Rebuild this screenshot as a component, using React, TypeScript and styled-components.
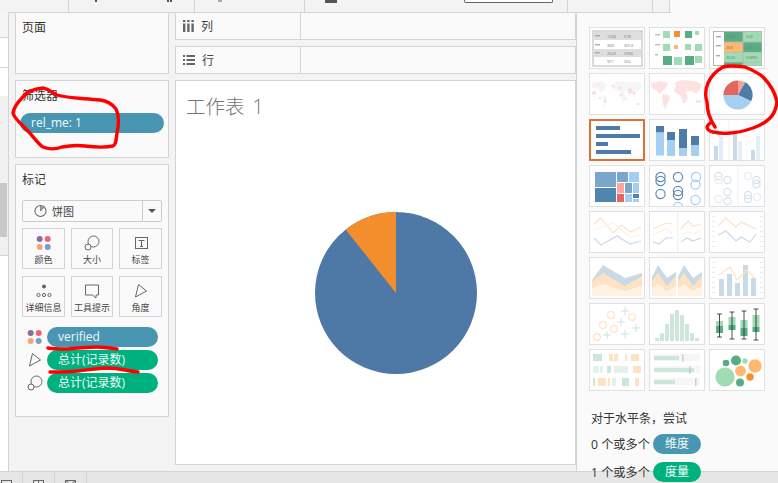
import React from "react";
import styled, { createGlobalStyle } from "styled-components";

const Global = createGlobalStyle`
  html, body { margin: 0; padding: 0; background: #f3f3f3; }
  * { box-sizing: border-box; }
`;

const LINE = "#d4d4d4";
const FONT = `"Open Sans", "Noto Sans CJK SC", sans-serif`;

const Page = styled.div`
  width: 778px; height: 483px; overflow: hidden; position: relative;
  display: flex; flex-direction: column; background: #f3f3f3;
  font-family: ${FONT}; color: #333; font-size: 12px;
`;
const TopStrip = styled.div`display: flex; height: 13px; flex: none;`;
const TopSeg = styled.div<{ $w: number; $pad?: number }>`
  width: ${(p) => p.$w}px; flex: none; padding-left: ${(p) => p.$pad ?? 0}px;
  border-right: 1px solid ${LINE}; border-bottom: 1px solid ${LINE};
  display: flex; align-items: flex-start;
`;
const TopRest = styled.div`flex: 1; background: #fafafa;`;
const TopMark = styled.div<{ $w: number; $h: number; $c?: string; $ml?: number }>`
  width: ${(p) => p.$w}px; height: ${(p) => p.$h}px; background: ${(p) => p.$c ?? "#555"};
  margin-left: ${(p) => p.$ml ?? 0}px;
`;
const TopField = styled.div`
  width: 89px; height: 3px; margin: 0 14px 0 auto; background: #fff; border: 1px solid #666; border-top: 0; border-radius: 0 0 2px 2px;
`;
const Main = styled.div`flex: 1; min-height: 0; margin-top: -1px; display: flex;`;
const Sidebar = styled.div`
  width: 9px; flex: none; border-right: 1px solid ${LINE}; display: flex; flex-direction: column; background: #fff;
`;
const SideBlock = styled.div<{ $h: number; $c: string; $line?: boolean }>`
  height: ${(p) => p.$h}px; flex: none; background: ${(p) => p.$c};
  border-bottom: ${(p) => (p.$line ? `1px solid ${LINE}` : "0")};
  display: flex; align-items: center; overflow: hidden;
`;
const Thumbbar = styled.div`width: 7px; height: 100%; background: #c8c8c8;`;
const CardColumn = styled.div`
  width: 166px; flex: none; padding: 0 6px; display: flex; flex-direction: column; gap: 6px;
`;
const Card = styled.section<{ $h: number }>`
  height: ${(p) => p.$h}px; flex: none; background: #fafafa; border: 1px solid ${LINE};
  padding: 6px 4px 0 6px;
`;
const CardTitle = styled.div`font-size: 12px; line-height: 17px; color: #333;`;
const FilterPill = styled.div`
  height: 20px; margin: 9px 0 0 -2px; border-radius: 10px; background: #4996b2; color: #f4fbfd;
  font-size: 12px; line-height: 20px; padding-left: 11px;
`;
const MarksDropdown = styled.div`
  height: 22px; margin: 12px 0 0 0; width: 140px; background: #fafafa; border: 1px solid #ccc; border-radius: 2px;
  display: flex; align-items: center; padding-left: 11px; gap: 5px; font-size: 11px; color: #444; position: relative;
`;
const Caret = styled.div`
  margin-left: auto; width: 19px; height: 100%; border-left: 1px solid #ccc;
  display: flex; align-items: center; justify-content: center;
  &::after { content: ""; border: 4px solid transparent; border-top: 4px solid #555; border-bottom: 0; }
`;
const MarkGrid = styled.div`
  display: grid; grid-template-columns: 43px 42px 43px; column-gap: 6px; row-gap: 7px; margin-top: 6px; width: 140px;
`;
const MarkButton = styled.div`
  height: 41px; border: 1px solid ${LINE}; display: flex; flex-direction: column; align-items: center;
  font-size: 9px; line-height: 12px; color: #444; padding-top: 6px; white-space: nowrap;
  svg { flex: none; margin-bottom: 3px; }
`;
const PillList = styled.div`display: flex; flex-direction: column; gap: 3px; margin-top: 10px;`;
const PillRow = styled.div`display: flex; align-items: center; gap: 4px; padding-left: 5px;`;
const FieldPill = styled.div<{ $c: string }>`
  width: 111px; height: 20px; border-radius: 10px; background: ${(p) => p.$c}; color: #eefaf6;
  font-size: 12px; line-height: 20px; padding-left: 11px; white-space: nowrap;
`;
const Center = styled.div`
  width: 401px; flex: none; display: flex; flex-direction: column; gap: 6px; padding-bottom: 6px;
`;
const Shelf = styled.div`
  height: 28px; flex: none; display: flex; background: #fafafa; border: 1px solid ${LINE};
`;
const ShelfLabel = styled.div`
  width: 125px; border-right: 1px solid ${LINE}; display: flex; align-items: center; gap: 7px; padding-left: 7px; color: #444;
`;
const View = styled.div`
  flex: 1; background: #fff; border: 1px solid ${LINE}; display: flex; flex-direction: column; padding: 13px 0 0 10px;
`;
const SheetTitle = styled.h1`
  margin: 0; font-size: 19.5px; font-weight: 300; line-height: 26px; color: #757575; word-spacing: 3px;
`;
const Chart = styled.div`margin: 92px 0 0 129px; line-height: 0;`;
const Panel = styled.aside`
  flex: 1; background: #fafafa; border-left: 1px solid ${LINE}; padding: 15px 0 0 12px; position: relative;
  &::before { content: ""; position: absolute; left: 0; top: 0; width: 94px; height: 1px; background: ${LINE}; }
`;
const ThumbGrid = styled.div`display: grid; grid-template-columns: repeat(3, 56px); grid-auto-rows: 42px; column-gap: 4px; row-gap: 4px;`;
const Thumb = styled.div<{ $on?: boolean }>`
  background: #fff; border: ${(p) => (p.$on ? "2px solid #e06f35" : "1px solid #e0e0e0")}; overflow: hidden; line-height: 0;
  svg { display: block; margin: ${(p) => (p.$on ? "-1px" : "0")}; }
`;
const Hint = styled.div`margin: 18px 0 0 2px; font-size: 12px; color: #333;`;
const HintHead = styled.div`line-height: 20px; height: 17px;`;
const HintRow = styled.div`display: flex; align-items: center; height: 20px; margin-top: 8px; white-space: nowrap;`;
const HintLabel = styled.span`width: 62px; font-size: 12.2px;`;
const HintPill = styled.span<{ $c: string }>`
  width: 48px; height: 20px; border-radius: 10px; background: ${(p) => p.$c}; color: #f0fbf8;
  text-align: center; line-height: 20px; font-size: 12px;
`;
const BottomBar = styled.div`
  height: 12px; flex: none; background: #e6e6e6; border-top: 1px solid ${LINE}; display: flex;
`;
const Tab = styled.div<{ $w: number }>`
  width: ${(p) => p.$w}px; flex: none; border-right: 1px solid ${LINE}; overflow: hidden; display: flex; justify-content: flex-end; padding: 8px 10px 0 0;
`;
const Annotations = styled.svg`position: absolute; left: 0; top: 0; pointer-events: none;`;

const G = "#666";
const DotsIcon = ({ s = 16 }: { s?: number }) => (
  <svg width={s} height={s} viewBox="0 0 16 16">
    <circle cx="3.7" cy="4" r="3" fill="#8a6d9c" /><circle cx="11.7" cy="4" r="3" fill="#ed6477" />
    <circle cx="3.7" cy="12" r="3" fill="#f0a878" /><circle cx="11.7" cy="12" r="3" fill="#7a9ccb" />
  </svg>
);
const SizeIcon = ({ s = 16 }: { s?: number }) => (
  <svg width={s} height={s} viewBox="0 0 16 16" fill="none" stroke={G} strokeWidth="1">
    <circle cx="9.5" cy="6.5" r="5.5" /><circle cx="4" cy="12" r="3" fill="#fafafa" />
  </svg>
);
const LabelIcon = () => (
  <svg width="16" height="16" viewBox="0 0 16 16" fill="none" stroke={G}>
    <rect x="2.5" y="2.5" width="12" height="11" /><path d="M5.5 5.5h6M8.5 5.5v6M7 11.5h3" />
  </svg>
);
const DetailIcon = () => (
  <svg width="16" height="16" viewBox="0 0 16 16" fill="none" stroke={G}>
    <circle cx="8" cy="3.5" r="2" fill={G} stroke="none" />
    <circle cx="2.5" cy="12" r="1.6" /><circle cx="8" cy="12" r="1.6" /><circle cx="13.5" cy="12" r="1.6" />
  </svg>
);
const TipIcon = () => (
  <svg width="16" height="16" viewBox="0 0 16 16" fill="none" stroke={G}>
    <path d="M1.5 1.5h13v10h-2.5v3l-3.5-3h-7z" transform="translate(0 .5)" />
  </svg>
);
const AngleIcon = ({ s = 16 }: { s?: number }) => (
  <svg width={s} height={s} viewBox="0 0 16 16" fill="none" stroke={G}>
    <path d="M5.5 1.5 L13.5 8 L2.5 14 Z" />
  </svg>
);
const PieIcon = () => (
  <svg width="13" height="14" viewBox="0 0 14 14" fill="none" stroke={G}>
    <circle cx="7" cy="7" r="6" strokeWidth="1.1" /><path d="M7 1v6l4-4.3" />
    <path d="M7 1.5v5.5l3.7-3.9A6 6 0 0 0 7 1.5z" fill="#999" stroke="none" />
  </svg>
);
const ColsIcon = () => (
  <svg width="11" height="12" viewBox="0 0 11 12" fill={G}>
    <rect x="0" y="0" width="2.4" height="2" /><rect x="0" y="3.5" width="2.4" height="8.5" />
    <rect x="4.2" y="0" width="2.4" height="2" /><rect x="4.2" y="3.5" width="2.4" height="8.5" />
    <rect x="8.4" y="0" width="2.4" height="2" /><rect x="8.4" y="3.5" width="2.4" height="8.5" />
  </svg>
);
const RowsIcon = () => (
  <svg width="12" height="10" viewBox="0 0 12 10" fill={G}>
    <rect x="0" y="0" width="2" height="2" /><rect x="3.5" y="0" width="8.5" height="2" />
    <rect x="0" y="4" width="2" height="2" /><rect x="3.5" y="4" width="8.5" height="2" />
    <rect x="0" y="8" width="2" height="2" /><rect x="3.5" y="8" width="8.5" height="2" />
  </svg>
);

const DK = "#57ad84", GR = "#9fdcb4", OR = "#f5912c", LO = "#ffb870", BL = "#4e7ca8", LB = "#a5cff0";
const PO = "#fde3c4", PB = "#cad9e6", PP = "#fef3e2", PG = "#cce6da", PG2 = "#e2f2ea";
const tx = { fontFamily: FONT, fontSize: 4, fill: "#777" } as const;
const Svg = ({ children }: { children: React.ReactNode }) => (
  <svg width="54" height="40" viewBox="0 0 54 40">{children}</svg>
);
const Rects = ({ items, fill }: { items: number[][]; fill: string }) => (
  <>{items.map((r, i) => <rect key={i} x={r[0]} y={r[1]} width={r[2]} height={r[3]} fill={fill} />)}</>
);
const Rings = ({ items, stroke, r = 4.6, w = 1.2 }: { items: number[][]; stroke: string; r?: number; w?: number }) => (
  <>{items.map((c, i) => <circle key={i} cx={c[0]} cy={c[1]} r={r} fill="none" stroke={stroke} strokeWidth={w} />)}</>
);
const Line = ({ p, c, w = 1.2 }: { p: string; c: string; w?: number }) => (
  <polyline points={p} fill="none" stroke={c} strokeWidth={w} />
);
const Ticks = ({ x, w = 3 }: { x: number; w?: number }) => (
  <>{[4, 9, 14, 19, 24, 29, 34].map((y) => <rect key={y} x={x} y={y} width={w} height="0.8" fill="#e6e6e6" />)}</>
);
const sector = (cx: number, cy: number, r: number, a: number, b: number) => {
  const pt = (d: number) => `${cx + r * Math.sin((d * Math.PI) / 180)} ${cy - r * Math.cos((d * Math.PI) / 180)}`;
  return `M${cx} ${cy}L${pt(a)}A${r} ${r} 0 ${b - a > 180 ? 1 : 0} 1 ${pt(b)}Z`;
};
const Area = ({ dx = 0, pts }: { dx?: number; pts: [string, string][] }) => (
  <g transform={`translate(${dx} 0)`}>{pts.map(([p, c], i) => <polygon key={i} points={p} fill={c} />)}</g>
);

const thumbs: React.ReactNode[] = [
  <Svg key="t1">
    <rect x="3" y="3" width="49" height="35" fill="none" stroke="#b5b5b5" />
    <Rects fill="#dedede" items={[[4, 4, 47, 8], [4, 21, 47, 8]]} />
    <Rects fill="#aaa" items={[[5, 7, 5, 1.4], [5, 16, 5, 1.4], [5, 24, 5, 1.4]]} />
    <text x="17" y="9.5" style={tx}>1234</text><text x="34" y="9.5" style={tx}>678</text>
    <text x="17" y="18.5" style={tx}>368</text><text x="34" y="18.5" style={tx}>3014</text>
    <text x="17" y="26.5" style={tx}>2620</text><text x="34" y="26.5" style={tx}>2956</text>
    <text x="17" y="35" style={tx}>971</text><text x="34" y="35" style={tx}>322</text>
  </Svg>,
  <Svg key="t2">
    <Rects fill="#bbb" items={[[5, 6, 5, 1.4], [5, 16, 5, 1.4], [5, 26, 3, 1.4]]} />
    <Rects fill={GR} items={[[13, 3, 7, 7], [45, 3, 4, 4], [13, 16, 7, 7], [35, 16, 6, 6], [45, 16, 7, 7], [24, 29, 8, 8], [45, 28, 7, 7]]} />
    <Rects fill={OR} items={[[24, 3, 6, 6]]} />
    <Rects fill={DK} items={[[35, 3, 7, 7], [13, 28, 9, 9], [35, 28, 9, 9]]} />
    <Rects fill={LO} items={[[24, 17, 4, 4]]} />
  </Svg>,
  <Svg key="t3">
    <rect x="3" y="3" width="49" height="35" fill="#b5b5b5" />
    <rect x="4" y="4" width="10" height="33" fill="#fff" />
    <Rects fill={DK} items={[[14, 4, 18.5, 9.5], [33.5, 14.5, 18, 9.5], [14, 34.5, 18.5, 3]]} />
    <Rects fill={GR} items={[[33.5, 4, 18, 9.5], [14, 24.5, 18.5, 9.5], [33.5, 24.5, 18, 9.5], [33.5, 34.5, 18, 3]]} />
    <Rects fill={LO} items={[[14, 14.5, 18.5, 9.5]]} />
    <Rects fill="#aaa" items={[[6, 8, 5, 1.4], [6, 17, 5, 1.4], [6, 27, 4, 1.4]]} />
    <text x="16" y="10" style={tx}>1234</text><text x="36" y="10" style={tx}>546</text>
    <text x="16" y="21" style={tx}>368</text><text x="36" y="21" style={tx}>340</text>
    <text x="16" y="31" style={tx}>2620</text><text x="36" y="31" style={tx}>53890</text>
  </Svg>,
  <Svg key="t4">
    <path d="M2 9l9-2 6 3-3 6-3 2-3-3-6-1zM12 21l5 1-1 8-2 3-1-6zM23 9l8-2 6 1 12 0 3 5-5 5-4 1-3-3-4 0-2 2 2 7-3 3-3-6-1-5-5-2 1-5z" fill="#f5f5f5" />
    {[[4, 19, 2], [8, 11, 1], [23, 12, 1.5], [30, 14, 1.2], [40, 17, 2.5], [44, 19, 1.5], [10, 24, 1.2], [15, 27, 1.5], [31, 21, 1], [48, 30, 1.3], [36, 25, 1]].map((c, i) => (
      <circle key={i} cx={c[0]} cy={c[1]} r={c[2]} fill="#f9dde0" />
    ))}
  </Svg>,
  <Svg key="t5">
    <path d="M1 9l10-2 7 2-3 6-4 3-1 3-3-4-5-3zM13 20l5 1 2 3-3 6-2 5-2-5-1-6zM24 9l8-3 12 1 8 3-1 4-4 5-3 0-2-2-4 0-2 1 2 6-3 5-2 0-3-8-3-1-3-4 2-4z" fill="#fde2e2" />
    <path d="M46 26l5 0 0 3-5 0z" fill="#fde2e2" />
  </Svg>,
  <Svg key="t6">
    <path d={sector(28, 21, 14.6, 0, 30)} fill="#fc9d9a" />
    <path d={sector(28, 21, 14.6, 30, 115)} fill={BL} />
    <path d={sector(28, 21, 14.6, 115, 270)} fill={LB} />
    <path d={sector(28, 21, 14.6, 270, 360)} fill="#e4655c" />
  </Svg>,
  <Svg key="t7"><Rects fill={BL} items={[[6, 6, 24, 4], [6, 14, 44, 4], [6, 22, 12, 4], [6, 30, 35, 4]]} /></Svg>,
  <Svg key="t8">
    <Rects fill={BL} items={[[6, 6, 8, 6.6], [17, 12, 8, 8], [29, 9, 8, 19], [41, 16, 8, 9]]} />
    <Rects fill={LB} items={[[6, 12.6, 8, 23], [17, 20, 8, 16], [29, 28, 8, 8], [41, 25, 8, 11]]} />
  </Svg>,
  <Svg key="t9">
    <Rects fill="#eef2f6" items={[[18.5, 0, 0.8, 40], [36.5, 0, 0.8, 40]]} />
    <Rects fill={PB} items={[[4, 26, 4, 14], [23, 10, 4, 30], [41, 30, 4, 10]]} />
    <Rects fill="#e3eef9" items={[[9, 17, 4, 23], [28, 21, 4, 19], [46, 16, 4, 24]]} />
  </Svg>,
  <Svg key="t10">
    <Rects fill="#7ba6cb" items={[[5, 6, 21, 15], [27, 6, 11, 10], [35, 17, 7, 10]]} />
    <Rects fill="#4e86ae" items={[[5, 22, 21, 14], [43, 28, 6, 4]]} />
    <Rects fill={LB} items={[[39, 6, 10, 10], [43, 17, 6, 10], [35, 28, 7, 8], [43, 33, 6, 3]]} />
    <Rects fill="#fca59f" items={[[27, 17, 7, 10]]} />
    <Rects fill="#e4655c" items={[[27, 28, 7, 8]]} />
  </Svg>,
  <Svg key="t11">
    <Rings stroke="#5d8db5" items={[[10.5, 11], [10.5, 15], [28, 11], [10.5, 28], [28, 25], [28, 29]]} />
    <Rings stroke={LB} items={[[46, 11], [45.5, 18.5], [45.5, 34], [28, 41]]} />
  </Svg>,
  <Svg key="t12">
    <rect x="27.5" y="0" width="0.8" height="40" fill="#e8eef4" />
    <Rings stroke="#d5e2ee" r={3.6} items={[[8.5, 10], [17.5, 14], [17.5, 26], [17.5, 35], [46.5, 14], [46.5, 18], [38, 29], [38, 33]]} />
    <Rings stroke="#e3eef9" r={3.6} items={[[8.5, 14], [8.5, 33], [38, 10], [47, 31]]} />
  </Svg>,
  <Svg key="t13">
    <Line c={PO} p="4,12 11,6 23,21 32,13 40,20 51,15" />
    <Line c={PP} p="4,18 23,11 40,25 51,23" />
    <Line c={PB} p="4,26 11,33 27,24 40,32 51,29" />
  </Svg>,
  <Svg key="t14">
    <rect x="27.5" y="0" width="0.8" height="40" fill="#e8e8e8" />
    <Line c={PO} p="3,17 16,11 23,12" /><Line c={PP} p="3,23 16,17 22,21" /><Line c={PB} p="3,30 9,32 16,26 23,26" />
    <Line c={PO} p="31,17 38,9 43,14 51,12" /><Line c={PP} p="31,23 38,20 44,22 51,18" /><Line c={PB} p="31,30 37,26 43,29 51,26" />
  </Svg>,
  <Svg key="t15">
    <Ticks x={2} /><Ticks x={50} />
    <Line c={PO} p="8,14 16,6 26,15 31,10 46,17" />
    <Line c={PB} p="8,23 16,19 26,29 31,25 40,30 46,22" />
  </Svg>,
  <Svg key="t16">
    <Area pts={[
      ["2,22 13,7 35,20 52,15 52,38 2,38", PB],
      ["2,23 13,15 35,28 52,18 52,38 2,38", PO],
      ["2,30 13,26 35,33 52,28 52,38 2,38", PP],
    ]} />
  </Svg>,
  <Svg key="t17">
    {[0, 26].map((d) => (
      <Area key={d} dx={d} pts={[
        ["2,19 8,7 17,20 26,14 26,38 2,38", PB],
        ["2,23 8,15 17,28 26,18 26,38 2,38", PO],
        ["2,30 8,26 17,33 26,28 26,38 2,38", PP],
      ]} />
    ))}
  </Svg>,
  <Svg key="t18">
    <Ticks x={2} /><Ticks x={50} />
    <Rects fill={PB} items={[[9, 21, 5, 17], [17, 16, 5, 22], [25, 25, 5, 13], [33, 7, 5, 31], [41, 20, 5, 18]]} />
    <Line c={PO} p="9,17 20,9 27,22 37,12 46,21" />
  </Svg>,
  <Svg key="t19">
    <Rings stroke={PO} r={3.4} items={[[21, 11], [42, 13], [13, 21], [24, 25], [7, 33]]} />
    <path d="M31 7h8M35 3v8M27 18h8M31 14v8M42 24h8M46 20v8M31 30h8M35 26v8M13 31h8M17 27v8" stroke={PG} fill="none" />
  </Svg>,
  <Svg key="t20">
    <Rects fill={PG} items={[[5, 34, 4, 3], [10, 29.5, 4, 7.5], [15, 20, 4, 17], [20, 10, 4, 27], [25, 6, 4, 31], [30, 11, 4, 26], [35, 20, 4, 17], [40, 29, 4, 8], [45, 34, 4, 3]]} />
  </Svg>,
  <Svg key="t21">
    <Rects fill={GR} items={[[6, 17, 7, 5], [18.5, 13, 7, 8], [30.5, 16, 7, 8], [42.5, 11, 7, 12]]} />
    <Rects fill={DK} items={[[6, 22, 7, 7], [18.5, 21, 7, 5], [30.5, 24, 7, 8], [42.5, 23, 7, 5]]} />
    <path d="M9.5 10v23M7 10h5M7 33h5M22 8v27M19.5 8h5M19.5 35h5M34 7v28M31.5 7h5M31.5 35h5M46 5v31M43.5 5h5M43.5 36h5" stroke="#222" strokeWidth="0.8" fill="none" />
  </Svg>,
  <Svg key="t22">
    <Rects fill={PG} items={[[3, 4, 9, 7], [17, 16, 4, 7], [3, 28, 2, 8], [32, 28, 7, 8]]} />
    <Rects fill={PO} items={[[19, 4, 4, 7], [24, 4, 4, 7], [35, 4, 2, 7], [41, 4, 8, 7], [43, 16, 8, 7], [8, 28, 8, 8], [18, 28, 2, 8], [45, 28, 4, 8]]} />
    <Rects fill={PG2} items={[[3, 16, 6, 7], [10, 16, 3, 7], [24, 16, 14, 7], [22, 28, 4, 8]]} />
  </Svg>,
  <Svg key="t23">
    <Rects fill="#f6f6f6" items={[[4, 4, 46, 7], [4, 16, 46, 7], [4, 28, 46, 7]]} />
    <Rects fill={PG} items={[[4, 6, 25, 4], [4, 18, 40, 4], [4, 30, 21, 4]]} />
    <Rects fill="#aaa" items={[[32.5, 4, 0.8, 8], [39.5, 16, 0.8, 8], [45.5, 28, 0.8, 8]]} />
  </Svg>,
  <Svg key="t24">
    {[[15, 27, 9.6, GR], [26, 10.5, 5, DK], [16, 13, 3.3, DK], [35, 11, 2.7, GR], [45, 16, 6.7, LO], [30.5, 21, 5.4, LO], [30, 32.5, 4, DK], [40, 27, 3.7, OR]].map((c, i) => (
      <circle key={i} cx={c[0] as number} cy={c[1] as number} r={c[2] as number} fill={c[3] as string} />
    ))}
  </Svg>,
];

export default function App() {
  return (
    <Page>
      <Global />
      <TopStrip>
        <TopSeg $w={69} />
        <TopSeg $w={126} $pad={26}><TopMark $w={2} $h={2} /><TopMark $w={2} $h={2} $ml={70} /><TopMark $w={2} $h={2} $ml={1} /></TopSeg>
        <TopSeg $w={110} $pad={23}><TopMark $w={4} $h={2} $c="#aaa" /></TopSeg>
        <TopSeg $w={263} $pad={20}><TopMark $w={12} $h={3} /><TopField /></TopSeg>
        <TopSeg $w={85} />
        <TopSeg $w={17} />
        <TopRest />
      </TopStrip>
      <Main>
        <Sidebar>
          <SideBlock $h={26} $c="#f5f5f5" $line />
          <SideBlock $h={30} $c="#fff" $line />
          <SideBlock $h={28} $c="#fff" />
          <SideBlock $h={87} $c="#f0f0f0" />
          <SideBlock $h={54} $c="#f0f0f0"><Thumbbar /></SideBlock>
          <SideBlock $h={19} $c="#f0f0f0" $line />
        </Sidebar>
        <CardColumn>
          <Card $h={62}><CardTitle>页面</CardTitle></Card>
          <Card $h={78}>
            <CardTitle>筛选器</CardTitle>
            <FilterPill>rel_me: 1</FilterPill>
          </Card>
          <Card $h={253}>
            <CardTitle>标记</CardTitle>
            <MarksDropdown><PieIcon /><span>饼图</span><Caret /></MarksDropdown>
            <MarkGrid>
              <MarkButton><DotsIcon />颜色</MarkButton>
              <MarkButton><SizeIcon />大小</MarkButton>
              <MarkButton><LabelIcon />标签</MarkButton>
              <MarkButton><DetailIcon />详细信息</MarkButton>
              <MarkButton><TipIcon />工具提示</MarkButton>
              <MarkButton><AngleIcon />角度</MarkButton>
            </MarkGrid>
            <PillList>
              <PillRow><DotsIcon /><FieldPill $c="#4996b2">verified</FieldPill></PillRow>
              <PillRow><AngleIcon /><FieldPill $c="#00b180">总计(记录数)</FieldPill></PillRow>
              <PillRow><SizeIcon /><FieldPill $c="#00b180">总计(记录数)</FieldPill></PillRow>
            </PillList>
          </Card>
        </CardColumn>
        <Center>
          <Shelf><ShelfLabel><ColsIcon />列</ShelfLabel></Shelf>
          <Shelf><ShelfLabel><RowsIcon />行</ShelfLabel></Shelf>
          <View>
            <SheetTitle>工作表 1</SheetTitle>
            <Chart>
              <svg width="162" height="162" viewBox="-81 -81 162 162">
                <circle r="81" fill="#4e79a7" />
                <path d="M0 0L0 -81A81 81 0 0 0 -50.4 -63.4Z" fill="#f28e2b" />
              </svg>
            </Chart>
          </View>
        </Center>
        <Panel>
          <ThumbGrid>
            {thumbs.map((t, i) => <Thumb key={i} $on={i === 6}>{t}</Thumb>)}
          </ThumbGrid>
          <Hint>
            <HintHead>对于水平条，尝试</HintHead>
            <HintRow><HintLabel>0 个或多个</HintLabel><HintPill $c="#4996b2">维度</HintPill></HintRow>
            <HintRow><HintLabel>1 个或多个</HintLabel><HintPill $c="#00b180">度量</HintPill></HintRow>
          </Hint>
        </Panel>
      </Main>
      <BottomBar>
        <Tab $w={23}>
          <svg width="11" height="8" viewBox="0 0 11 8" fill="none" stroke="#666"><rect x=".5" y=".5" width="10" height="10" /></svg>
        </Tab>
        <Tab $w={32}>
          <svg width="11" height="8" viewBox="0 0 11 8" fill="none" stroke="#666"><rect x=".5" y=".5" width="10" height="10" /><path d="M5.5 0v8" /></svg>
        </Tab>
        <Tab $w={32}>
          <svg width="11" height="8" viewBox="0 0 11 8" fill="none" stroke="#666"><path d="M.5 .5h10v10h-10zM.5 .5l5 4 5-4" /></svg>
        </Tab>
      </BottomBar>
      <Annotations width="778" height="483" viewBox="0 0 778 483" fill="none" stroke="#f00" strokeWidth="3.4" strokeLinecap="round" strokeLinejoin="round">
        <path d="M22 98C26 92 32 89 43 88C50 89 52 93 57 95C66 98 77 98 100 100C108 101 113 105 116 109C119 115 119 124 117 133C116 140 116 145 113 146C104 148 93 147 85 146C78 145 72 145 62 147C54 150 48 149 43 147C38 144 34 137 27 130C20 123 14 118 13 113C14 107 18 102 22 98Z" />
        <path d="M715 127C709 118 707 110 707 102C705 96 705 90 708 83C711 76 716 71 723 67C730 65 737 66 745 67C750 69 757 72 763 77C770 84 775 92 777 102C776 110 774 114 770 118C764 124 759 126 753 128C744 131 737 133 730 133C724 134 718 133 713 132C709 131 707 129 707 127C708 124 710 123 712 122" />
        <path d="M48 348C54 349 60 349 67 349C77 348 86 347 97 347C104 347 110 348 117 349" />
        <path d="M50 372C60 372 68 372 77 371C88 370 97 368 107 368C118 368 128 371 138 372" />
      </Annotations>
    </Page>
  );
}
